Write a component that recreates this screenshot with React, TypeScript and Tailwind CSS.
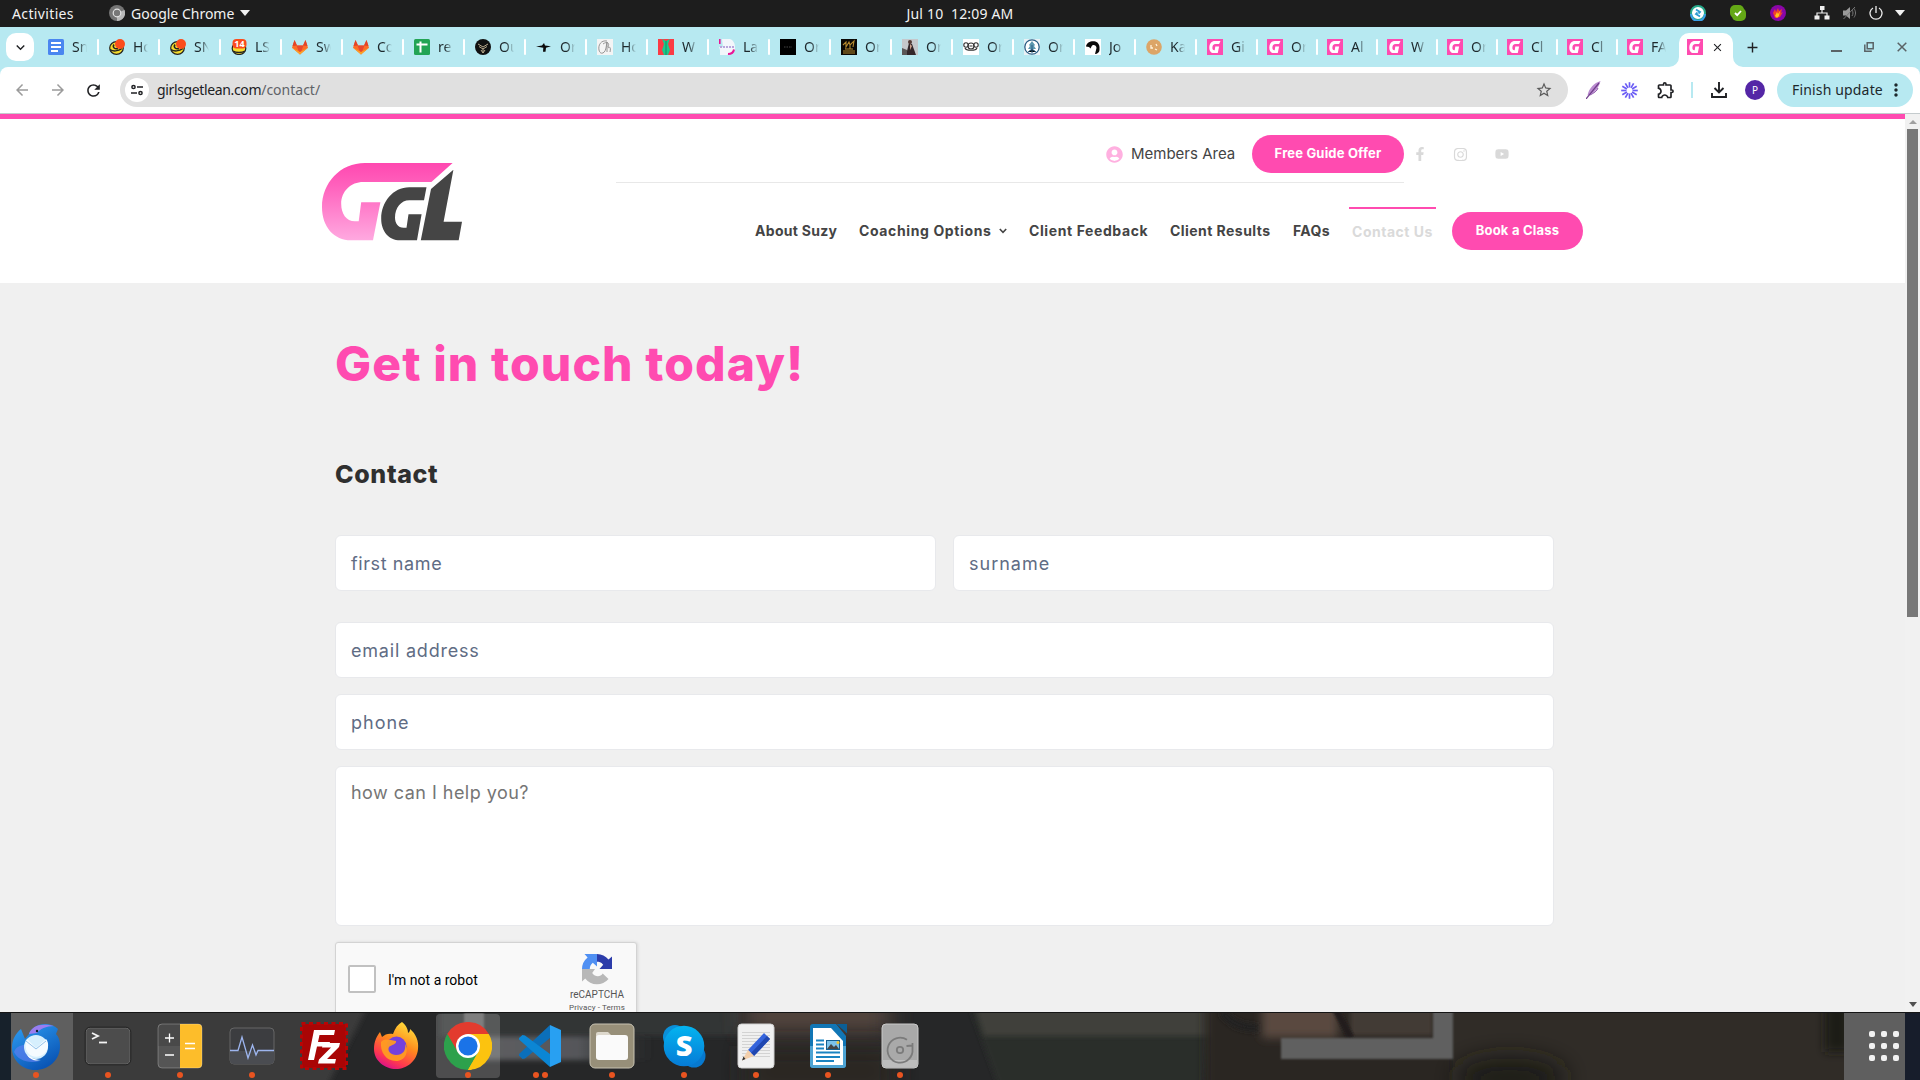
import type { ReactNode } from "react";
import { FaFacebookF, FaYoutube, FaUserCircle, FaInstagram } from "react-icons/fa";
import { MdArrowBack, MdArrowForward, MdRefresh, MdStarBorder, MdOutlineExtension, MdMoreVert, MdAdd, MdClose, MdKeyboardArrowDown } from "react-icons/md";

/* ---------- favicons (16x16) ---------- */
function Fav({ children }: { children: ReactNode }) {
  return <svg width="16" height="16" viewBox="0 0 16 16" className="shrink-0">{children}</svg>;
}
const Docs = () => <Fav><rect width="16" height="16" rx="1.5" fill="#4a86f0" /><path d="M3 4h10M3 8h10M3 12h7" stroke="#fff" strokeWidth="1.8" /></Fav>;
const Sheets = () => <Fav><rect width="16" height="16" rx="1.5" fill="#23a455" /><path d="M2.5 5.5h11M6.5 2.5v11" stroke="#fff" strokeWidth="2" /></Fav>;
const Mailish = () => (
  <Fav>
    <ellipse cx="7.5" cy="9" rx="6.8" ry="6.3" fill="#f5dc2c" stroke="#222" strokeWidth="1.2" />
    <path d="M1 10.5c3 2 8 2 12-1M5 5.5c-2 3 1 5 4 4" stroke="#222" strokeWidth="1.5" fill="none" />
    <circle cx="11" cy="5" r="5" fill="#fb4c1c" />
  </Fav>
);
const Mail14 = () => (
  <Fav>
    <ellipse cx="8" cy="9.5" rx="6.8" ry="6" fill="#f5dc2c" stroke="#222" strokeWidth="1.2" />
    <path d="M2 12c3 2 9 2 12 0" stroke="#222" strokeWidth="1.4" fill="none" />
    <rect x="1.5" y="0" width="14" height="9.5" rx="4" fill="#fb4c1c" />
    <text x="8.5" y="8.3" textAnchor="middle" fontFamily="Noto Sans" fontWeight="700" fontSize="9" fill="#fff">14</text>
  </Fav>
);
const Gitlab = () => (
  <Fav>
    <path d="M8 15.500L0 8.800 2.500 1 5 6.500h6l2.500-5.500L16 8.800z" fill="#fc6d26" />
    <path d="M.500 7L2.500 1 5 6.500zM15.500 7L13.500 1 11 6.500z" fill="#e24329" />
    <path d="M4.500 6.500h7L8 15.500z" fill="#e8482d" />
    <path d="M0 8.800L4 12l4 3.500 4-3.500 4-3.200L8 13z" fill="#fca326" />
  </Fav>
);
const Owl = () => <Fav><ellipse cx="8" cy="8" rx="8" ry="8" fill="#111" /><path d="M3 5l5 3 5-3M4 7.500l4 2.500 4-2.500M8 9v5M6 11l2 3 2-3" stroke="#b9a98c" strokeWidth="1" fill="none" /></Fav>;
const Bird = () => <Fav><path d="M0 7.500l6-1 2-2.500 1 2.500 6 .8-5 1.500-.5 4H7l.3-4z" fill="#0a0a0a" /></Fav>;
const Script = () => <Fav><rect width="16" height="16" fill="#f4f4f4" /><path d="M10 2C4 1 1 6 2 11s6 4 7-2L10 3v10M6 5c4-3 7-1 5 3M11 9c2-2 3 0 2 4" stroke="#8a8a8a" strokeWidth=".9" fill="none" /></Fav>;
const Dress = () => <Fav><rect width="16" height="16" fill="#fb3b44" /><path d="M4 0l2 5-2 6 2 5h4l2-5-2-6 2-5-4 2z" fill="#1cc98b" /><path d="M8 2v14" stroke="#12835d" strokeWidth=".8" /></Fav>;
const Lady = () => <Fav><path d="M.800 0v5" stroke="#ea1596" strokeWidth="1.600" /><path d="M3 0h8c3 1 5 4 5 8v3l-8 5H1v-5l-1-3h4z" fill="#f3f6fb" /><path d="M9 15c3 0 5.500-1.500 6-4.500" stroke="#ea1596" strokeWidth="2" fill="none" /><path d="M1 8h14" stroke="#b9a6dc" strokeWidth="2" strokeDasharray="2 1" /></Fav>;
const Dark = () => <Fav><rect width="16" height="16" fill="#000" /><path d="M4 8h8" stroke="#444" strokeDasharray="1.500 1" /></Fav>;
const Gold = () => <Fav><rect width="16" height="16" fill="#0b0905" /><path d="M2 6l3-3v5l3-5 1 3 4-4-1 6M2 14h12M2 12h12M4 10h8M9 6v4" stroke="#b58a2e" strokeWidth="1.100" fill="none" /></Fav>;
const Photo = () => <Fav><rect width="16" height="16" fill="#c5c8cb" /><path d="M4 16L7 4l3 1 4 11z" fill="#33272a" /><circle cx="8" cy="3" r="2" fill="#523a35" /><path d="M0 9l5 2v5H0z" fill="#5b5757" /><path d="M8 5l2 2-2 4z" fill="#caa08c" /></Fav>;
const Monkeys = () => <Fav><rect width="16" height="16" fill="#fff" /><g fill="none" stroke="#333" strokeWidth="1.100"><circle cx="8" cy="7" r="3" /><circle cx="3" cy="6" r="2.200" /><circle cx="13" cy="6" r="2.200" /><path d="M2 9c1 3 11 3 12 0M6.500 7h3" /></g></Fav>;
const Tree = () => <Fav><rect width="16" height="16" fill="#e9f2f6" /><circle cx="8" cy="8" r="7.200" fill="#fff" stroke="#2c5f86" strokeWidth="1.300" /><path d="M8 2l3 4-1 1 2 3H4l2-3-1-1z" fill="#5c97ae" /><path d="M8 6v8M4 13l4-3 4 3" stroke="#2c5f86" /></Fav>;
const Helmet = () => <Fav><rect width="16" height="16" fill="#fff" /><path d="M1 7.500C2 1 14 0 14.500 8v3c0 2-2 4-4.500 4l1.500-6c0-3.500-4.500-4-5-1.500L5.500 9.500 4 8z" fill="#090909" /></Fav>;
const Cookie = () => <Fav><circle cx="8" cy="8" r="7.800" fill="#dca567" /><path d="M5 6v3h2M10 5l1 2M9 10l2 1" stroke="#fff3dc" strokeWidth="1.300" fill="none" /></Fav>;
const GFav = () => (
  <Fav>
    <rect width="16" height="16" fill="#ff4bb0" />
    <path d="M13.500 2H8C4.500 2 2.500 4.500 2.300 8.500 2.200 12 4 14 6.500 14h4.300l1.300-6.500H8.300l-.6 3.700c-1.700.2-2.400-.8-2.300-2.700C5.500 6.300 6.500 5 8.500 5h3.600z" fill="#fff" />
  </Fav>
);

const TABS: { icon: ReactNode; label: string }[] = [
  { icon: <Docs />, label: "Sn" }, { icon: <Mailish />, label: "Ho" }, { icon: <Mailish />, label: "SN" },
  { icon: <Mail14 />, label: "LS" }, { icon: <Gitlab />, label: "Sw" }, { icon: <Gitlab />, label: "Co" },
  { icon: <Sheets />, label: "re" }, { icon: <Owl />, label: "Ou" }, { icon: <Bird />, label: "Or" },
  { icon: <Script />, label: "Ho" }, { icon: <Dress />, label: "W" }, { icon: <Lady />, label: "La" },
  { icon: <Dark />, label: "Or" }, { icon: <Gold />, label: "Or" }, { icon: <Photo />, label: "Or" },
  { icon: <Monkeys />, label: "Or" }, { icon: <Tree />, label: "Or" }, { icon: <Helmet />, label: "Jo" },
  { icon: <Cookie />, label: "Ka" },
];
const GTABS = ["Gi", "Or", "Al", "W", "Or", "Cl", "Cl", "FA"];

function Tab({ icon, label, narrow, last }: { icon: ReactNode; label: string; narrow?: boolean; last?: boolean }) {
  return (
    <div className={`flex h-full shrink-0 items-center ${narrow ? "w-[60px]" : "w-[61px]"}`}>
      {icon}
      <span className="ml-2 w-[15px] overflow-hidden whitespace-nowrap text-[14px] leading-5 text-[#1d282c] [mask-image:linear-gradient(to_right,#000_45%,transparent)]">{label}</span>
      <span className={`ml-[10px] h-4 w-[2px] rounded-sm ${last ? "" : "bg-white"}`} />
    </div>
  );
}

function TopBar() {
  return (
    <div className="flex h-[27px] shrink-0 items-center bg-[#1d1d1d] pb-[1px] text-[14px] text-[#f2f2f2]">
      <div className="flex flex-1 items-center">
        <span className="ml-3 w-[63px] tracking-[0.36px]">Activities</span>
        <svg width="16" height="16" viewBox="0 0 16 16" className="ml-[34px]">
          <circle cx="8" cy="8" r="8" fill="#757575" />
          <path d="M8 8L15.500 5A8 8 0 0 1 8 16z" fill="#b9b9b9" />
          <circle cx="8" cy="8" r="3.800" fill="#777" stroke="#e4e4e4" strokeWidth="1.200" />
        </svg>
        <span className="ml-[6px] w-[104px]">Google Chrome</span>
        <svg width="10" height="6" className="ml-[5px]"><path d="M0 0h10L5 6z" fill="#f2f2f2" /></svg>
      </div>
      <span className="whitespace-pre tracking-[0.18px]">{"Jul 10  12:09 AM"}</span>
      <div className="flex flex-1 items-center justify-end">
        <svg width="16" height="16" viewBox="0 0 16 16"><circle cx="8" cy="8" r="7" fill="#fff" stroke="#27a98b" strokeWidth="2" /><path d="M1 9a7 7 0 0 0 14 0" stroke="#39a0e8" strokeWidth="2" fill="none" /><path d="M6 4.500l4 2.500-1.500 1.500M10 11.500L6 9l1.500-1.500" stroke="#2d9bd1" strokeWidth="1.800" fill="none" /></svg>
        <svg width="16" height="16" viewBox="0 0 16 16" className="ml-6"><rect width="14" height="13" rx="5" fill="#64a816" /><rect x="2" y="3" width="14" height="13" rx="5" fill="#64a816" /><path d="M5 8l2.200 2.200L11 6" stroke="#fff" strokeWidth="1.800" fill="none" /></svg>
        <svg width="16" height="16" viewBox="0 0 16 16" className="ml-6"><circle cx="8" cy="8" r="8" fill="#8a06a8" /><path d="M3 8l2-4 1 3 2-4 1 3 3-2-1 4 2-1-3 5-5 1z" fill="#f2402c" /><path d="M5 11l2-4 1 2 2-3-1 5-2 2z" fill="#ffc21a" /></svg>
        <svg width="16" height="14" viewBox="0 0 16 14" className="ml-[28px]"><path d="M8 3v4M3 10V7h10v3" stroke="#eee" strokeWidth="1.200" fill="none" /><rect x="6" y="0" width="4.500" height="4" fill="#eee" /><rect x="0.500" y="9.500" width="5" height="4" fill="#eee" /><rect x="10.500" y="9.500" width="5" height="4" fill="#eee" /></svg>
        <svg width="16" height="16" viewBox="0 0 16 16" className="ml-[12px]"><path d="M1 5.500h3L8 2v12L4 10.500H1z" fill="#999" /><path d="M10 5c1.300 2 1.300 4 0 6M12 3.500c2 3 2 6 0 9" stroke="#777" fill="none" /><path d="M1.500 14L13 2" stroke="#777" strokeWidth="1" /></svg>
        <svg width="14" height="14" viewBox="0 0 14 14" className="ml-[11px]"><path d="M4 2a6 6 0 1 0 6 0M7 0v7" stroke="#eee" strokeWidth="1.300" fill="none" /></svg>
        <svg width="10" height="6" className="ml-3 mr-[15px]"><path d="M0 0h10L5 6z" fill="#f2f2f2" /></svg>
      </div>
    </div>
  );
}

function TabStrip() {
  return (
    <div className="flex h-10 shrink-0 items-center bg-[#b7e9f1]">
      <div className="ml-[6px] mr-[14px] flex h-7 w-7 items-center justify-center rounded-[10px] bg-white"><MdKeyboardArrowDown size={17} className="text-[#202124]" /></div>
      <div className="flex h-full">
        {TABS.map((t, i) => <Tab key={i} icon={t.icon} label={t.label} />)}
        {GTABS.map((t, i) => <Tab key={i} icon={<GFav />} label={t} narrow last={i === 7} />)}
      </div>
      <div className="relative -ml-[8px] flex h-[34px] w-[54px] items-center self-end rounded-t-[10px] bg-white pb-[6px] pl-2">
        <svg width="10" height="10" className="absolute -left-[10px] bottom-0"><path d="M10 0v10H0A10 10 0 0 0 10 0z" fill="#fff" /></svg>
        <svg width="10" height="10" className="absolute -right-[10px] bottom-0"><path d="M0 0v10h10A10 10 0 0 1 0 0z" fill="#fff" /></svg>
        <GFav />
        <MdClose size={13} className="ml-[8px] text-[#202124]" />
      </div>
      <MdAdd size={17} className="ml-[11px] text-[#202124]" />
      <div className="ml-auto flex items-center pr-[13px] text-[#5a6366]">
        <span className="mt-[8px] h-[2px] w-[11px] bg-[#5a6366]" />
        <svg width="10" height="10" viewBox="0 0 10 10" className="ml-[22px]"><path d="M3.200.800h6v6h-6zM.800 2.500v6.700h7" fill="none" stroke="#5a6366" strokeWidth="1.500" /></svg>
        <svg width="10" height="10" viewBox="0 0 10 10" className="ml-[23px]"><path d="M.700.700l8.600 8.600M9.300.700L.700 9.300" stroke="#5a6366" strokeWidth="1.500" /></svg>
      </div>
    </div>
  );
}

const RAYS = [0, 30, 60, 90, 120, 150, 180, 210, 240, 270, 300, 330];

function Toolbar() {
  return (
    <div className="shrink-0 bg-[#b7e9f1]">
      <div className="flex h-[47px] items-center rounded-t-[8px] border-b border-[#c4cbcd] bg-white">
        <MdArrowBack size={18} className="ml-[13px] text-[#9b9b9b]" />
        <MdArrowForward size={18} className="ml-[18px] text-[#9b9b9b]" />
        <MdRefresh size={19} className="ml-[17px] text-[#202124]" />
        <div className="ml-[17px] flex h-[34px] w-[1448px] items-center rounded-full bg-[#e0e0e0] pl-[5px] pr-[15px]">
          <div className="flex h-6 w-6 items-center justify-center rounded-full bg-white">
            <svg width="12" height="12" viewBox="0 0 12 12"><g fill="none" stroke="#202124" strokeWidth="1.500"><circle cx="2.500" cy="3" r="1.600" /><path d="M6 3h6M0 9h6" /><circle cx="9.500" cy="9" r="1.600" /></g></svg>
          </div>
          <span className="mb-[2px] ml-2 text-[14px] tracking-[-0.36px] text-[#202124]">girlsgetlean.com</span>
          <span className="mb-[2px] text-[14px] text-[#5f6368]">/contact/</span>
          <MdStarBorder size={18} className="ml-auto text-[#5a5a5a]" />
        </div>
        <svg width="15" height="18" viewBox="0 0 15 18" className="ml-[18px]"><path d="M14.500 0C8 2 3 7 1.500 14.500 7 13 12 9 14.500 0z" fill="#b98bcf" /><path d="M0 18L13 2" stroke="#6f3c8a" strokeWidth="1.200" /><path d="M4 14c4-2 7-4 8-7" stroke="#8a4fa8" strokeWidth="1" fill="none" /></svg>
        <svg width="17" height="17" viewBox="-8.500 -8.500 17 17" className="ml-[20px]">
          {RAYS.map((a) => <path key={a} d="M0-3V-8.300" stroke="#6a5cf5" strokeWidth="1.700" transform={`rotate(${a})`} />)}
        </svg>
        <MdOutlineExtension size={20} className="ml-[18px] text-[#202124]" />
        <span className="ml-[15px] h-4 w-[2px] bg-[#b7e9f1]" />
        <svg width="16" height="16" viewBox="0 0 16 16" className="ml-[18px]"><path d="M8 0v10M3.500 6L8 10.500 12.500 6M1 11v4h14v-4" fill="none" stroke="#202124" strokeWidth="1.900" /></svg>
        <span className="ml-[18px] flex h-5 w-5 items-center justify-center rounded-full bg-[#5426a6] text-[10px] text-white">P</span>
        <div className="ml-3 flex h-[34px] w-[136px] items-center rounded-full bg-[#b7e9f1] pl-[15px]">
          <span className="mb-[2px] w-[92px] whitespace-nowrap text-[14px] tracking-[0.16px] text-[#1d282c]">Finish update</span>
          <MdMoreVert size={20} className="ml-[2px] text-[#1d282c]" />
        </div>
      </div>
    </div>
  );
}

function Logo() {
  return (
    <svg width="140" height="78" viewBox="0 0 140 78" className="ml-[322px] mt-[44px] shrink-0">
      <defs><linearGradient id="ggl" x1="0" y1="0" x2="0" y2="1"><stop offset="0" stopColor="#ff48b0" /><stop offset=".3" stopColor="#ff62bd" /><stop offset="1" stopColor="#ffa9e0" /></linearGradient></defs>
      <path d="M130.600 0H43C18 0 0 20 0 44c0 20 12 33.300 29 33.300h22L58.400 39.300H39.200L36.700 58.300H33c-9 0-13.800-8-13.800-17.300C19.200 28 29 19 41.200 19h68.200z" fill="url(#ggl)" />
      <path d="M104.500 24.300H87.300C71 24.300 59.200 39 59.200 55.700c0 13 8 21.600 18.800 21.600h17l4.600-26H86.500l-2 13.400h-2.900c-5.600 0-8.600-4.700-8.600-10.200 0-9.500 6-17.200 14.300-17.200H102z" fill="#454545" />
      <path d="M131.400 6.700L109 26 98.800 77.300h37.900L140 58.700h-18.400z" fill="#454545" />
    </svg>
  );
}

function SiteHeader() {
  return (
    <header className="flex h-[169px] shrink-0 border-t-[5px] border-[#ff4bb0] bg-white font-[Inter,sans-serif]">
      <Logo />
      <div className="ml-[154px]">
        <div className="flex">
          <div className="flex h-[64px] w-[788px] justify-end border-b border-[#e8e8e8] pt-4">
            <div className="flex h-[38px] items-center">
              <FaUserCircle size={17} className="text-[#ffb0e0]" />
              <span className="ml-2 w-[105px] whitespace-nowrap text-[15px] text-[#444]">Members Area</span>
              <button className="ml-[16px] h-[38px] w-[152px] whitespace-nowrap rounded-full bg-[#ff4bb0] text-[13px] font-bold tracking-[0.18px] text-white">Free Guide Offer</button>
            </div>
          </div>
          <div className="flex h-[70px] items-center text-[#d9d9d9]">
            <FaFacebookF size={14} className="ml-[9px]" />
            <FaInstagram size={15} className="ml-[26px]" />
            <FaYoutube size={14} className="ml-[27px]" />
          </div>
        </div>
        <nav className="ml-[139px] mt-[18px] flex h-[43px] w-[828px] items-center whitespace-nowrap text-[14px] font-bold text-[#444] [&>span]:pt-[3px]">
          <span className="w-[82px] tracking-[0.3px]">About Suzy</span>
          <span className="ml-[22px] w-[132px] tracking-[0.62px]">Coaching Options</span>
          <svg width="8" height="6" viewBox="0 0 8 6" className="ml-2 mt-[5px]"><path d="M.800 1L4 4.300 7.200 1" fill="none" stroke="#444" strokeWidth="1.600" /></svg>
          <span className="ml-[22px] w-[119px] tracking-[0.6px]">Client Feedback</span>
          <span className="ml-[22px] w-[101px] tracking-[0.45px]">Client Results</span>
          <span className="ml-[22px] w-[37px] tracking-[0.37px]">FAQs</span>
          <span className="ml-[19px] flex h-[43px] w-[87px] items-center self-start border-t-2 border-[#ff4bb0] pl-[3px] tracking-[0.52px] text-[#dadada]">Contact Us</span>
          <button className="ml-4 h-[38px] w-[131px] shrink-0 translate-y-[2px] rounded-full bg-[#ff4bb0] text-[13px] tracking-[0.22px] text-white">Book a Class</button>
        </nav>
      </div>
    </header>
  );
}

function Captcha() {
  return (
    <div className="mt-4 flex h-[80px] w-[302px] rounded-t-[3px] border border-[#d3d3d3] bg-[#f9f9f9] font-[Roboto,sans-serif] shadow-[1px_0_3px_rgba(0,0,0,0.1)]">
      <span className="ml-3 mt-[22px] h-7 w-7 rounded-[2px] border-2 border-[#c1c1c1] bg-white" />
      <span className="ml-3 mt-[27px] text-[14px] leading-5 text-black">I'm not a robot</span>
      <div className="ml-auto mr-[9px] flex w-[60px] flex-col items-center">
        <svg width="32" height="32" viewBox="0 0 32 32" className="mt-[10px] shrink-0">
          <path d="M16 1a15 15 0 0 1 11.500 5.600L31 3.500V16H18.500l3.700-4.200C20 9 18 8.800 16 8.800z" fill="#2c3caa" />
          <path d="M1 16A15 15 0 0 1 6.600 4.500L3.500 1H16v12.500l-4.200-3.700C9.500 11.500 8.800 14 8.800 16z" fill="#5090f3" />
          <path d="M1 16v12.500l3.200-3A15 15 0 0 0 27.500 26l-5.800-5.500c-2 3.500-7.500 4-10.500-.500L14 16z" fill="#b8b8b8" />
        </svg>
        <span className="mt-[3px] text-[10px] leading-[14px] text-[#555]">reCAPTCHA</span>
        <span className="whitespace-nowrap text-[8px] leading-[11px] tracking-[0.1px] text-[#555]">Privacy - Terms</span>
      </div>
    </div>
  );
}

function Field({ text, track }: { text: string; track: string }) {
  return <div className="flex h-14 flex-1 items-center rounded-[6px] border border-[#e8e9ec] bg-white pl-[15px]"><span className={`text-[18px] text-[#606c84] ${track}`}>{text}</span></div>;
}

function Page() {
  return (
    <div className="flex h-[898px] shrink-0 overflow-hidden bg-[#f0f0f0]">
      <div className="flex w-[1905px] flex-col">
        <SiteHeader />
        <main className="ml-[335px] w-[1219px] font-[Inter,sans-serif]">
          <h1 className="mt-[46px] h-[70px] text-[48px] font-extrabold leading-[70px] tracking-[1.1px] text-[#ff4bb0]">Get in touch today!</h1>
          <h2 className="mt-[55px] h-10 text-[25px] font-extrabold leading-10 tracking-[0.65px] text-[#2f2f2f]">Contact</h2>
          <div className="mt-[41px] flex gap-[17px]">
            <Field text="first name" track="tracking-[0.6px]" />
            <Field text="surname" track="tracking-[1px]" />
          </div>
          <div className="mt-[31px] flex"><Field text="email address" track="tracking-[0.8px]" /></div>
          <div className="mt-4 flex"><Field text="phone" track="tracking-[0.98px]" /></div>
          <div className="mt-4 h-[160px] rounded-[6px] border border-[#e8e9ec] bg-white pl-[15px] pt-[12px] text-[18px] leading-7 tracking-[0.47px] text-[#757575]">how can I help you?</div>
          <Captcha />
        </main>
      </div>
      <div className="flex w-[15px] flex-col items-center bg-[#f1f1f1]">
        <svg width="8" height="4" className="mt-[6px] shrink-0"><path d="M0 4h8L4 0z" fill="#a0a0a0" /></svg>
        <span className="mt-[5px] h-[488px] w-[11px] shrink-0 bg-[#787878]" />
        <svg width="8" height="5" className="mb-[5px] mt-auto shrink-0"><path d="M0 0h8L4 5z" fill="#505050" /></svg>
      </div>
    </div>
  );
}

/* ---------- dock ---------- */
function Wallpaper() {
  return (
    <svg width="1920" height="68" className="absolute inset-0">
      <defs>
        <filter id="b8" filterUnits="userSpaceOnUse" x="0" y="-60" width="1920" height="200"><feGaussianBlur stdDeviation="12" /></filter>
        <filter id="b5" filterUnits="userSpaceOnUse" x="0" y="-60" width="1920" height="200"><feGaussianBlur stdDeviation="5" /></filter>
        <filter id="b2" filterUnits="userSpaceOnUse" x="-20" y="-60" width="1960" height="200"><feGaussianBlur stdDeviation="2.500" /></filter>
        <filter id="b1" filterUnits="userSpaceOnUse" x="0" y="-60" width="1920" height="200"><feGaussianBlur stdDeviation="1" /></filter>
        <linearGradient id="wh" x1="0" x2="1"><stop offset="0" stopColor="#5f6061" /><stop offset=".6" stopColor="#55565a" /><stop offset="1" stopColor="#3a3b3c" stopOpacity="0" /></linearGradient>
      </defs>
      <rect width="1920" height="68" fill="#262728" />
      <path d="M-20-20H375L320 88H-20z" fill="#3b3b3b" filter="url(#b2)" />
      <rect x="440" y="-10" width="300" height="34" fill="#333536" filter="url(#b2)" />
      <rect x="0" y="0" width="11" height="68" fill="#17212b" />
      <rect x="11" y="0" width="62" height="68" fill="#5f5f5f" />
      <rect x="464" y="24" width="190" height="24" fill="url(#wh)" filter="url(#b2)" />
      <rect x="464" y="-5" width="20" height="35" fill="#626262" filter="url(#b1)" />
      <rect x="745" y="-14" width="145" height="36" fill="#56463f" filter="url(#b8)" />
      <rect x="745" y="34" width="150" height="50" fill="#2a2523" filter="url(#b8)" />
      <path d="M968-10h245l-10 88H1000z" fill="#2c2d2b" filter="url(#b2)" />
      <path d="M972-15h243v39H984z" fill="#3f413b" filter="url(#b2)" />
      <rect x="1205" y="-15" width="250" height="100" fill="#2b2521" filter="url(#b5)" />
      <rect x="1262" y="-20" width="76" height="46" fill="#5a493f" filter="url(#b5)" />
      <rect x="1350" y="-20" width="83" height="44" fill="#433b36" filter="url(#b2)" />
      <path d="M1335-4l16 30" stroke="#211f1e" strokeWidth="7" filter="url(#b1)" />
      <path d="M1222 0c10 12 20 16 36 16" stroke="#242221" strokeWidth="8" fill="none" filter="url(#b2)" />
      <rect x="1453" y="0" width="391" height="68" fill="#302c27" />
      <ellipse cx="1510" cy="66" rx="55" ry="20" fill="#1b1a19" filter="url(#b8)" />
      <rect x="1825" y="-10" width="24" height="50" fill="#1e1b19" filter="url(#b5)" />
      <path d="M1281 26h152V-5h20v52h-172z" fill="#606060" filter="url(#b1)" />
      <rect x="1844" y="0" width="61" height="68" fill="#5f5f5f" />
      <rect x="1905" y="0" width="15" height="68" fill="#171d2b" />
      <rect width="1920" height="1" fill="#151515" />
    </svg>
  );
}

function DockIcon({ dots, active, children }: { dots: number; active?: boolean; children: ReactNode }) {
  return (
    <div className="flex h-[68px] w-[72px] shrink-0 justify-center pt-[2px]">
      <div className={`flex h-16 w-16 flex-col items-center rounded-[4px] pt-2 ${active ? "bg-white/18" : ""}`}>
        <svg width="48" height="48" viewBox="0 0 48 48" className="shrink-0">{children}</svg>
        <div className="mt-[2px] flex gap-[3px]">
          {Array.from({ length: dots }, (_, i) => <span key={i} className="h-[6px] w-[6px] rounded-full bg-[#e95420]" />)}
        </div>
      </div>
    </div>
  );
}

function Dock() {
  return (
    <div className="relative h-[68px] shrink-0 overflow-hidden">
      <Wallpaper />
      <div className="relative flex h-full">
        <DockIcon dots={1}>
          <defs><linearGradient id="tb" x1="0" y1="0" x2="0.600" y2="1"><stop offset="0" stopColor="#2fa0f5" /><stop offset="1" stopColor="#0a55b5" /></linearGradient></defs>
          <path d="M9 7c-5 4-9 10-9 19 0 12 10 22 23 22 14 0 25-10 25-24 0-5-1-9-4-12l2-5C41 2 33 1 27 3c-5 2-9 5-10 9L13 17z" fill="url(#tb)" />
          <path d="M17 12C20 4 28 1 42 4c-8 0-14 3-17 7z" fill="#9a7df0" />
          <path d="M2 30c2-5 6-7 11-7 0 11 5 15 15 16-12 3-22-1-26-9z" fill="#5b7ff0" opacity=".7" />
          <circle cx="24" cy="25" r="12" fill="#d6effd" /><path d="M15 17l9 9 10-9c3 3 3 10-1 14-5 5-13 5-17 0-3-4-3-10-1-14z" fill="#f5fbff" /><path d="M14 19l10 8 10-8" stroke="#93c2ea" fill="none" />
          <path d="M15 33c4 6 10 6 14 5-8 0-11-4-14-5z" fill="#fff" />
          <circle cx="25" cy="9" r="1.200" fill="#123" />
        </DockIcon>
        <DockIcon dots={1}>
          <rect x="2" y="6" width="44" height="36" rx="4" fill="#4c4c4c" stroke="#666" /><rect x="1.200" y="5.200" width="45.600" height="37.600" rx="5" fill="none" stroke="#222" />
          <path d="M8 11l6 3-6 3" stroke="#f4f4f4" strokeWidth="1.800" fill="none" /><path d="M15 20.500h8" stroke="#f4f4f4" strokeWidth="1.800" />
        </DockIcon>
        <DockIcon dots={1}>
          <rect x="2" y="2" width="44" height="44" rx="4" fill="#555" /><path d="M2 6a4 4 0 0 1 4-4h18v22H2z" fill="#494949" /><path d="M24 2h18a4 4 0 0 1 4 4v36a4 4 0 0 1-4 4H24z" fill="#fdbd2a" />
          <path d="M9 16h9M13.500 11.500v9M9 33h9M29 21.500h10M29 26.500h10" stroke="#fff" strokeWidth="1.300" /><rect x="2" y="2" width="44" height="44" rx="4" fill="none" stroke="#fff" strokeOpacity=".25" />
        </DockIcon>
        <DockIcon dots={1}>
          <rect x="2" y="6" width="44" height="36" rx="4" fill="#3c3d40" stroke="#666" /><path d="M2 29h44v9a4 4 0 0 1-4 4H6a4 4 0 0 1-4-4z" fill="#4a4c51" />
          <path d="M2 28.500h8L14 15l6 21 4.500-13 3.500 10 2-4.500h16" stroke="#9db5ee" strokeWidth="1.300" fill="none" />
        </DockIcon>
        <DockIcon dots={0}>
          <rect x="2" y="2" width="44" height="44" fill="#a90505" /><rect x="1.500" y="1.500" width="45" height="45" fill="none" stroke="#b80505" strokeWidth="3" strokeDasharray="4 3.500" />
          <path d="M14 8h21l-1 5H19.500l-1.500 7h12l-1 4.500H17L14 38H8z" fill="#fff" /><path d="M23 21h17l-1 4-12 12h9l-1 4.500H18l1-4 12-12h-9z" fill="#fff" />
        </DockIcon>
        <DockIcon dots={0}>
          <defs><linearGradient id="ff" x1=".8" y1="0" x2=".3" y2="1"><stop offset="0" stopColor="#ffe53e" /><stop offset=".45" stopColor="#ff8a1d" /><stop offset=".8" stopColor="#ff3750" /><stop offset="1" stopColor="#d9108c" /></linearGradient></defs>
          <path d="M30 0c5 4 6 8 6 11 2-1 2-3 2-4 6 5 9 12 8 20-1 12-11 20-22 20S2 39 2 27c0-8 3-13 6-17l2 5c3-3 7-4 11-3 2-6 5-10 9-12z" fill="url(#ff)" />
          <circle cx="24.500" cy="24.500" r="10" fill="#7541dc" /><path d="M9 20c4-4 8-2 15-1 1 3-5 4-7 6-2 4 2 8 7 8 8 0 10-6 9-11 4 7 1 17-9 17C14 39 8 30 9 20z" fill="#ff9b22" opacity=".95" />
        </DockIcon>
        <DockIcon dots={1} active>
          <path d="M24 24L3.200 12A24 24 0 0 1 44.800 12z" fill="#e33b2e" /><path d="M24 24L44.800 12A24 24 0 0 1 24 48z" fill="#fcc30f" /><path d="M24 24v24A24 24 0 0 1 3.200 12z" fill="#2da14c" />
          <path d="M24 12h20.800L34.400 30z" fill="#fcc30f" /><path d="M13.600 30L3.200 12 24 12z" fill="#e33b2e" /><path d="M13.600 30L3.200 12 3 13l7 20z" fill="#2da14c" /><path d="M34.400 30L24 48l-6-13z" fill="#2da14c" />
          <path d="M34.400 30L24 48h3l12-11z" fill="#fcc30f" />
          <circle cx="24" cy="24" r="12" fill="#fff" /><circle cx="24" cy="24" r="9.600" fill="#1a73e8" />
        </DockIcon>
        <DockIcon dots={2}>
          <path d="M34 3v13L9 36.500 6.500 37 3 33.500V32z" fill="#0b6fba" /><path d="M34 45V32L9 13.500l-2.500-.5L3 16v1.500z" fill="#0b86d4" /><path d="M34 3l11 5v32l-11 5z" fill="#28a0f2" />
        </DockIcon>
        <DockIcon dots={1}>
          <rect x="2" y="2" width="44" height="44" rx="5" fill="#978f79" stroke="#c7c2b2" /><path d="M8 15V12a2 2 0 0 1 2-2h10l4 4z" fill="#ddd8cc" /><rect x="8" y="13" width="32" height="25" rx="3" fill="#fafafa" />
        </DockIcon>
        <DockIcon dots={1}>
          <defs><linearGradient id="sk" x1="0" y1="0" x2="0" y2="1"><stop offset="0" stopColor="#04b4f0" /><stop offset="1" stopColor="#067bd6" /></linearGradient></defs>
          <circle cx="15" cy="15" r="12" fill="#0b8fd8" /><circle cx="34" cy="34" r="11.500" fill="#0779cf" /><circle cx="24" cy="24" r="20.300" fill="url(#sk)" />
          <text x="24" y="34" textAnchor="middle" fontFamily="Open Sans" fontSize="29" fontWeight="800" fill="#fff">S</text>
        </DockIcon>
        <DockIcon dots={1}>
          <rect x="6" y="2" width="36" height="44" rx="3.500" fill="#f0f0f0" stroke="#cfcfcf" /><path d="M10 10.500h28M10 13.500h28M10 16.500h28M10 19.500h28M10 22.500h28M10 25.500h28M10 28.500h28M10 31.500h28M10 34.500h28" stroke="#ccc" strokeWidth=".8" />
          <path d="M32 11l6 6L22 34l-6-6z" fill="#3564dc" /><path d="M35 14l3 3L22 34l-3-3z" fill="#2047b0" /><path d="M16 28l6 6-12 4.500z" fill="#f3cfab" /><path d="M11.500 34.500L13.500 37 10 38.500z" fill="#333" />
        </DockIcon>
        <DockIcon dots={1}>
          <path d="M6 5a3 3 0 0 1 3-3h23l10 12v29a3 3 0 0 1-3 3H9a3 3 0 0 1-3-3z" fill="#1176b5" /><path d="M6 24h36v19a3 3 0 0 1-3 3H9a3 3 0 0 1-3-3z" fill="#4da3d3" /><path d="M9 6h18l12 13v24H9z" fill="#fff" />
          <path d="M32.500 2H43v9.500z" fill="#0b5f96" />
          <path d="M12 18.500h8M12 22.500h8M12 26.500h8M12 30.500h24M12 35h24M12 39h18" stroke="#1b83c1" strokeWidth="2" /><rect x="22.500" y="18.500" width="13" height="9" fill="#7cc2ea" stroke="#155f8f" /><path d="M23 27l4-5 3 3 2-2 3 4z" fill="#454545" />
          <circle cx="34" cy="20.500" r="1.500" fill="#f3c52f" />
        </DockIcon>
        <DockIcon dots={1}>
          <rect x="6" y="2" width="36" height="44" rx="4" fill="#a9a9a9" stroke="#c9c9c9" /><path d="M7 38h34v4a3 3 0 0 1-3 3H10a3 3 0 0 1-3-3z" fill="#bdbdbd" />
          <path d="M31 17.800A12.500 12.500 0 1 0 36.500 27v-6M36.500 23.500l-6 .500" fill="none" stroke="#7b7b7b" strokeWidth="1.800" /><circle cx="24" cy="28" r="3.200" fill="none" stroke="#7b7b7b" strokeWidth="1.800" />
        </DockIcon>
        <div className="ml-auto mr-[21px] mt-[19px] grid h-[30px] grid-cols-3 gap-[6px]">
          {Array.from({ length: 9 }, (_, i) => <span key={i} className="h-[6px] w-[6px] rounded-[2px] bg-[#f2f2f2]" />)}
        </div>
      </div>
    </div>
  );
}

export default function App() {
  return (
    <div className="flex h-[1080px] w-[1920px] flex-col overflow-hidden bg-[#f0f0f0] font-['Noto_Sans',sans-serif]">
      <TopBar />
      <TabStrip />
      <Toolbar />
      <Page />
      <Dock />
    </div>
  );
}
